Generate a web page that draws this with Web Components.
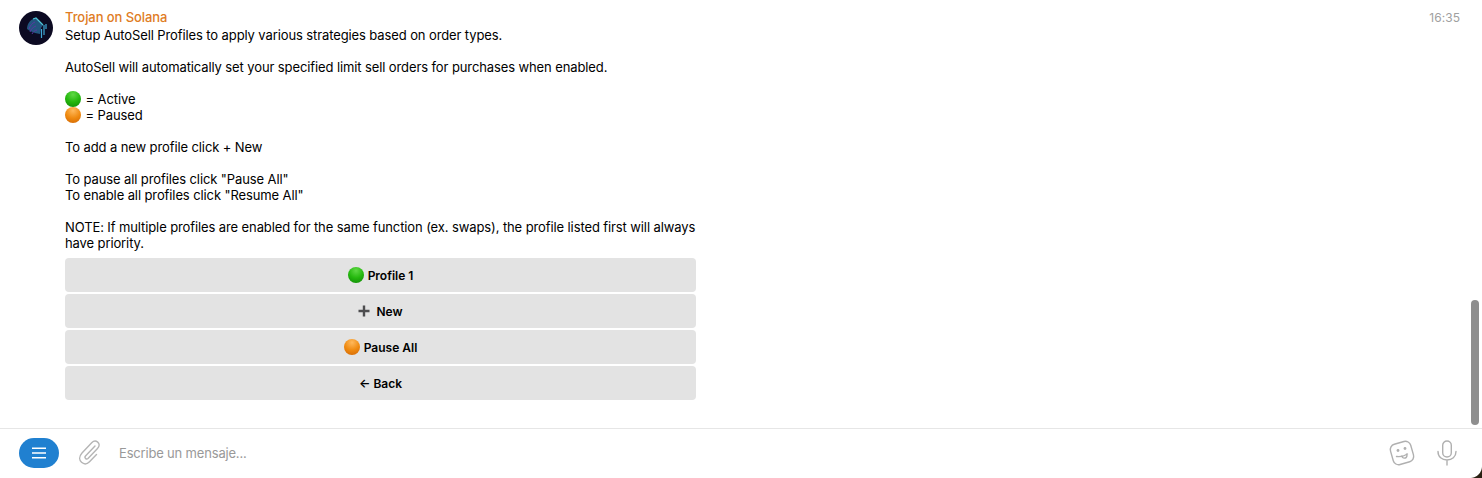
<!DOCTYPE html>
<html><head><meta charset="utf-8">
<style>
html,body{margin:0;padding:0;background:#fff;}
body{width:1482px;height:478px;overflow:hidden;font-family:Inter,"Liberation Sans",sans-serif;}
</style></head><body>
<chat-window>
  <chat-message slot="log" name="Trojan on Solana" time="16:35">
    Setup AutoSell Profiles to apply various strategies based on order types.<br><br>AutoSell will automatically set your specified limit sell orders for purchases when enabled.<br><br><status-dot color="green"></status-dot> = Active<br><status-dot color="orange"></status-dot> = Paused<br><br>To add a new profile click + New<br><br>To pause all profiles click "Pause All"<br>To enable all profiles click "Resume All"<br><br>NOTE: If multiple profiles are enabled for the same function (ex. swaps), the profile listed first will always have priority.
    <inline-keys slot="keys">
      <key-button><status-dot color="green"></status-dot> Profile 1</key-button>
      <key-button><plus-mark></plus-mark> New</key-button>
      <key-button><status-dot color="orange"></status-dot> Pause All</key-button>
      <key-button>← Back</key-button>
    </inline-keys>
  </chat-message>
  <chat-composer slot="composer"></chat-composer>
</chat-window>
<script>
function def(name,css,html,init){
  customElements.define(name,class extends HTMLElement{
    constructor(){super();const r=this.attachShadow({mode:'open'});r.innerHTML='<style>'+css+'</style>'+html;}
    connectedCallback(){if(init)init(this);}
  });
}
def('chat-window',
`:host{display:flex;flex-direction:column;width:1482px;height:478px;position:relative;overflow:hidden;background:#fff}
.log{flex:0 0 428px;box-sizing:border-box;border-bottom:0}
.comp{flex:1;border-top:1px solid #e6e6e6}
.thumb{position:absolute;left:1471px;top:300px;width:8px;height:125px;border-radius:4px;background:#8e8e8e}
.corner{position:absolute;right:0;bottom:0;width:12px;height:12px;background:radial-gradient(circle at 0 0,transparent 11.5px,#2a2012 12.5px)}`,
`<div class="log"><slot name="log"></slot></div><div class="comp"><slot name="composer"></slot></div><div class="thumb"></div><div class="corner"></div>`);
def('chat-message',
`:host{display:grid;grid-template-columns:34px 631px 1fr;column-gap:12px;padding:10px 22px 0 19px;font-size:13px;line-height:16px;color:#000;letter-spacing:-.107px}
.ava{width:34px;height:34px;margin-top:1px;display:block}
.name{color:#e07c24;font-weight:500;height:17px;line-height:15px;letter-spacing:-.08px}
.text{display:block}
.keys{display:block;margin-top:7px}
.time{justify-self:end;color:#a0a0a0;font-size:12px;line-height:15px;letter-spacing:.05px}`,
`<svg class="ava" viewBox="0 0 34 34"><circle cx="17" cy="17" r="17" fill="#0c0a22"/>
<path d="M8 18c0-4 2-8 6-10l3-1 3 3 4 4-2 3-1 6-5-1-5-2z" fill="#22557f"/>
<path d="M10 18c1-3 3-6 6-7M11 21c1-3 3-5 6-6M13 23c1-2 3-4 5-4" stroke="#5a36a0" stroke-width="1" fill="none"/>
<path d="M14 8l3-1 3 3 4 4" stroke="#4fc6d8" stroke-width="1.2" fill="none"/>
<path d="M25 14v10M22.500 18v9M27 13v5" stroke="#3fa8d6" stroke-width="1.2" fill="none"/></svg>
<div><div class="name"></div><div class="text"><slot></slot></div><div class="keys"><slot name="keys"></slot></div></div>
<div class="time"></div>`,
el=>{el.shadowRoot.querySelector('.name').textContent=el.getAttribute('name');el.shadowRoot.querySelector('.time').textContent=el.getAttribute('time');});
def('status-dot',
`:host{display:inline-block;width:16px;height:16px;border-radius:50%;vertical-align:-3px;margin-right:1px}
:host([color=green]){background:radial-gradient(circle at 50% 22%,#5fd845 0,#25b80e 50%,#0e8506 100%)}
:host([color=orange]){background:radial-gradient(circle at 50% 22%,#ffb95c 0,#ef8a10 52%,#cf6404 100%)}`,``);
def('plus-mark',
`:host{display:inline-block;width:12px;height:12px;vertical-align:-1.5px;margin-right:3px}svg{display:block}`,
`<svg width="12" height="12" viewBox="0 0 12 12"><path d="M6 .5v11M.5 6h11" stroke="#4d4d4f" stroke-width="2.4"/></svg>`);
def('inline-keys',`:host{display:flex;flex-direction:column;gap:2px}`,`<slot></slot>`);
def('key-button',
`:host{display:flex;align-items:center;justify-content:center;height:34px;background:#e3e3e3;border-radius:4px;font-size:12px;font-weight:600;letter-spacing:0;color:#000;white-space:pre}
div{height:16px;line-height:16px;padding-top:1px}
::slotted(status-dot){margin-top:-4px}
::slotted(plus-mark){margin-top:-2px}`,
`<div><slot></slot></div>`);
def('chat-composer',
`:host{display:flex;align-items:center;height:48px;padding:0 25px 1px 19px;font-size:13px;color:#999}
.menu{width:40px;height:30px;border-radius:15px;background:#2080d0;display:flex;align-items:center;justify-content:center;margin-right:18px}
.clip{margin-right:18px;display:block}
.ph{flex:1;letter-spacing:-.18px}
.st{margin-right:21px;display:block}.mic{display:block}`,
`<div class="menu"><svg width="14" height="12" viewBox="0 0 14 12"><path d="M0 1.2h14M0 6h14M0 10.8h14" stroke="#fff" stroke-width="1.6" fill="none"/></svg></div>
<svg class="clip" width="24" height="26" viewBox="0 0 24 26" fill="none" stroke="#b5b5b5" stroke-width="1.4" stroke-linecap="round"><path d="M18 6 8.500 16c-1.500 1.700.8 4 2.500 2.500L20.500 8.500c2.500-2.700 1.800-5.200.2-6.400-1.800-1.400-4.200-1.200-6 .7L5 13C1.500 17 2.500 20.500 4.500 22.300c2.300 2 5.500 2 8-.6l7-7.300"/></svg>
<div class="ph">Escribe un mensaje...</div>
<svg class="st" width="28" height="28" viewBox="0 0 28 28" fill="none" stroke="#b0b0b0" stroke-width="1.4" stroke-linecap="round"><rect x="3.500" y="3.500" width="21" height="21" rx="5.500" transform="rotate(-16 14 14)"/><circle cx="10" cy="11.500" r="1.400" fill="#b0b0b0" stroke="none"/><circle cx="17" cy="9.500" r="1.400" fill="#b0b0b0" stroke="none"/><path d="M8.500 17.500c3.500.5 7.500-.3 11-2.500"/><path d="M14 17c.4 2.700 4.200 3 5-.2l-.5-1.600"/></svg>
<svg class="mic" width="20" height="26" viewBox="0 0 20 26" fill="none" stroke="#b0b0b0" stroke-width="1.400" stroke-linecap="round"><rect x="5.700" y="1" width="8.600" height="16" rx="4.300"/><path d="M1 11.500c0 5.500 4 8.500 9 8.500s9-3 9-8.500M10 20v5"/></svg>`);
</script>
</body></html>
